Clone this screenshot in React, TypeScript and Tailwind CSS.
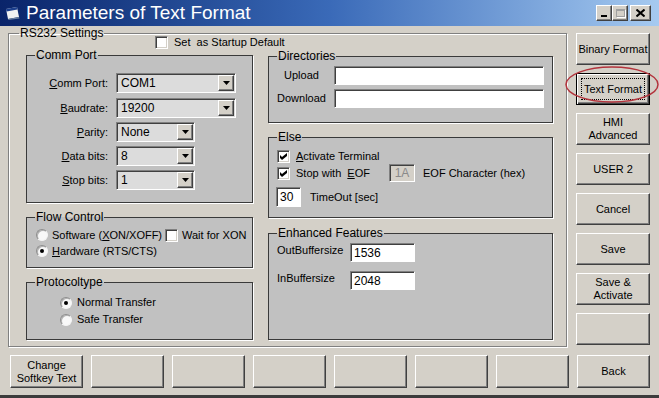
import React from "react";

type Kids = { children?: React.ReactNode };

function U({ children }: Kids) {
  return <span className="underline underline-offset-[1px] decoration-1">{children}</span>;
}

function Group({ title, className = "", children }: Kids & { title: string; className?: string }) {
  return (
    <fieldset
      className={`bg-[#c1c1c1] border border-[#3a3a3a] shadow-[1px_1px_0_#ffffff] ${className}`}
    >
      <legend className="ml-[8px] px-[1px] text-[12px] leading-[13px]">{title}</legend>
      {children}
    </fieldset>
  );
}

function Button({ lines, focused = false }: { lines: string[]; focused?: boolean }) {
  return (
    <button
      className={`relative w-[74px] h-[32px] shrink-0 bg-[#d4d0c8] text-[11px] leading-[13px] text-black flex flex-col items-center justify-center ${
        focused
          ? "border border-black shadow-[inset_1px_1px_0_#ffffff,inset_-1px_-1px_0_#404040,inset_-2px_-2px_0_#808080]"
          : "border border-t-white border-l-white border-r-[#404040] border-b-[#404040] shadow-[inset_-1px_-1px_0_#808080]"
      }`}
    >
      {lines.map((l) => (
        <span key={l}>{l}</span>
      ))}
      {focused && <span className="absolute inset-[4px] border border-dotted border-black" />}
    </button>
  );
}

function BottomButton({ lines }: { lines: string[] }) {
  return (
    <button className="w-[73px] h-[33px] shrink-0 bg-[#d4d0c8] text-[11px] leading-[13px] text-black flex flex-col items-center justify-center border border-t-white border-l-white border-r-[#404040] border-b-[#404040] shadow-[inset_-1px_-1px_0_#808080]">
      {lines.map((l) => (
        <span key={l}>{l}</span>
      ))}
    </button>
  );
}

function Combo({ value, width }: { value: string; width: string }) {
  return (
    <div
      className={`${width} h-[20px] flex items-center bg-[#dcdcdc] border border-t-[#808080] border-l-[#808080] border-r-white border-b-white shadow-[inset_1px_1px_0_#404040] pl-[4px] pr-[1px]`}
    >
      <span className="flex-1 text-[12px] leading-[14px]">{value}</span>
      <span className="w-[16px] h-[16px] flex items-center justify-center bg-[#d4d0c8] border border-t-white border-l-white border-r-[#404040] border-b-[#404040] shadow-[inset_-1px_-1px_0_#808080]">
        <svg width="7" height="4" viewBox="0 0 7 4">
          <path d="M0 0h7L3.5 4z" fill="#000" />
        </svg>
      </span>
    </div>
  );
}

function Field({ value = "", className = "", disabled = false }: { value?: string; className?: string; disabled?: boolean }) {
  return (
    <div
      className={`${className} flex items-center pl-[3px] border border-t-[#808080] border-l-[#808080] border-r-white border-b-white shadow-[inset_1px_1px_0_#404040] text-[12px] leading-[14px] ${
        disabled ? "bg-[#d4d0c8] text-[#8a8a8a]" : "bg-white text-black"
      }`}
    >
      {value}
    </div>
  );
}

function Check({ checked = false }: { checked?: boolean }) {
  return (
    <span className="w-[13px] h-[13px] shrink-0 bg-white flex items-center justify-center border border-t-[#808080] border-l-[#808080] border-r-white border-b-white shadow-[inset_1px_1px_0_#404040,inset_-1px_-1px_0_#d4d0c8]">
      {checked && (
        <svg width="7" height="7" viewBox="0 0 7 7">
          <path d="M0 2L2 4L7 0V3L2 7L0 5Z" fill="#000" />
        </svg>
      )}
    </span>
  );
}

function Radio({ checked = false }: { checked?: boolean }) {
  return (
    <span className="w-[12px] h-[12px] shrink-0 rounded-full bg-[#f8f8f8] flex items-center justify-center border border-t-[#8c8c8c] border-l-[#8c8c8c] border-r-[#f4f4f4] border-b-[#f4f4f4] shadow-[inset_1px_1px_0_#b0b0b0]">
      {checked && <span className="w-[4px] h-[4px] rounded-full bg-black" />}
    </span>
  );
}

export default function App() {
  const combos: [React.ReactNode, string, string][] = [
    [<><U>C</U>omm Port:</>, "COM1", "w-[120px]"],
    [<><U>B</U>audrate:</>, "19200", "w-[120px]"],
    [<><U>P</U>arity:</>, "None", "w-[79px]"],
    [<><U>D</U>ata bits:</>, "8", "w-[79px]"],
    [<><U>S</U>top bits:</>, "1", "w-[79px]"],
  ];

  return (
    <div className="relative w-[659px] h-[398px] bg-[#d4d0c8] overflow-hidden border-b-[3px] border-[#3c3c3c] font-['Liberation_Sans',Arial,sans-serif] text-[11px] text-black">
      {/* Title bar */}
      <div className="h-[26px] flex items-center bg-linear-to-r from-[#0a246a] via-[#3a6ab8] to-[#a6caf0]">
        <svg className="ml-[5px]" width="16" height="14" viewBox="0 0 16 14">
          <path d="M1 3L12 1L14 11L3 13Z" fill="#f2f2f2" />
          <path d="M1 3L12 1L12.5 3.5L1.5 5.5Z" fill="#1c3f8c" />
          <path d="M3 13L14 11L14.5 12.5L3.5 14Z" fill="#6a7f9e" />
        </svg>
        <span className="ml-[5px] text-[19px] leading-[22px] text-white">Parameters of Text Format</span>
        <div className="ml-auto mr-[8px] flex items-center">
          <span className="w-[16px] h-[16px] bg-[#d4d0c8] flex items-end justify-center pb-[3px] border border-t-white border-l-white border-r-[#404040] border-b-[#404040] shadow-[inset_-1px_-1px_0_#808080]">
            <span className="w-[6px] h-[2px] bg-black" />
          </span>
          <span className="w-[16px] h-[16px] bg-[#d4d0c8] flex items-center justify-center border border-t-white border-l-white border-r-[#404040] border-b-[#404040] shadow-[inset_-1px_-1px_0_#808080]">
            <span className="w-[9px] h-[8px] border border-[#a0a0a0] border-t-2 shadow-[1px_1px_0_#ffffff]" />
          </span>
          <span className="ml-[2px] w-[21px] h-[16px] bg-[#d4d0c8] flex items-center justify-center border border-t-white border-l-white border-r-[#404040] border-b-[#404040] shadow-[inset_-1px_-1px_0_#808080]">
            <svg width="9" height="8" viewBox="0 0 9 8">
              <path d="M0.5 0.5L8.5 7.5M8.5 0.5L0.5 7.5" stroke="#000" strokeWidth="2" />
            </svg>
          </span>
        </div>
      </div>

      {/* Main area */}
      <div className="flex">
        <fieldset className="ml-[8px] mt-[1px] w-[559px] h-[320px] border border-[#808080] shadow-[1px_1px_0_#ffffff,inset_1px_1px_0_#ffffff]">
          <legend className="ml-[10px] px-[1px] text-[12px] leading-[13px]">RS232 Settings</legend>

          <div className="-mt-[4px] h-[13px] ml-[146px] flex items-center">
            <Check />
            <span className="ml-[6px] leading-[13px]">Set&nbsp;&nbsp;as Startup Default</span>
          </div>

          <div className="flex pl-[17px] gap-[15px]">
            {/* left column */}
            <div className="w-[227px] flex flex-col">
              <Group title="Comm Port" className="h-[154px]">
                <div className="pt-[11px] flex flex-col gap-[4px]">
                  {combos.map(([label, value, w], i) => (
                    <div key={value} className={`flex items-center h-[20px] ${i === 0 ? "mb-[1px]" : ""}`}>
                      <span className="w-[81px] text-right text-[11px]">{label}</span>
                      <div className="ml-[8px]">
                        <Combo value={value} width={w} />
                      </div>
                    </div>
                  ))}
                </div>
              </Group>

              <Group title="Flow Control" className="mt-[8px] h-[57px]">
                <div className="pt-[3px] text-[11px]">
                  <div className="h-[16px] flex items-center pl-[9px]">
                    <Radio />
                    <span className="ml-[4px] w-[113px] whitespace-nowrap">
                      Software (<U>X</U>ON/XOFF)
                    </span>
                    <Check />
                    <span className="ml-[4px] whitespace-nowrap">Wait for XON</span>
                  </div>
                  <div className="h-[16px] flex items-center pl-[9px]">
                    <Radio checked />
                    <span className="ml-[4px]">
                      <U>H</U>ardware (RTS/CTS)
                    </span>
                  </div>
                </div>
              </Group>

              <Group title="Protocoltype" className="mt-[8px] h-[64px]">
                <div className="pt-[5px] text-[11px]">
                  <div className="h-[17px] flex items-center pl-[33px]">
                    <Radio checked />
                    <span className="ml-[5px]">Normal Transfer</span>
                  </div>
                  <div className="h-[17px] flex items-center pl-[33px]">
                    <Radio />
                    <span className="ml-[5px]">Safe Transfer</span>
                  </div>
                </div>
              </Group>
            </div>

            {/* right column */}
            <div className="w-[285px] flex flex-col">
              <Group title="Directories" className="mt-[1px] h-[73px]">
                <div className="pt-[3px] flex flex-col gap-[4px] text-[11px]">
                  <div className="h-[19px] flex items-center">
                    <span className="w-[65px] text-center">Upload</span>
                    <Field className="w-[210px] h-[19px]" />
                  </div>
                  <div className="h-[19px] flex items-center">
                    <span className="w-[65px] text-center">Download</span>
                    <Field className="w-[210px] h-[19px]" />
                  </div>
                </div>
              </Group>

              <Group title="Else" className="mt-[8px] h-[87px]">
                <div className="pt-[5px] text-[11px]">
                  <div className="h-[15px] flex items-center pl-[8px]">
                    <Check checked />
                    <span className="ml-[6px]">
                      <U>A</U>ctivate Terminal
                    </span>
                  </div>
                  <div className="h-[18px] flex items-center pl-[8px]">
                    <Check checked />
                    <span className="ml-[6px] w-[93px] whitespace-nowrap">
                      Stop with&nbsp;&nbsp;<U>E</U>OF
                    </span>
                    <Field value="1A" disabled className="w-[26px] h-[18px] justify-center !pl-0" />
                    <span className="ml-[8px]">EOF Character (hex)</span>
                  </div>
                  <div className="mt-[5px] h-[20px] flex items-center pl-[7px]">
                    <Field value="30" className="w-[25px] h-[20px]" />
                    <span className="ml-[9px]">TimeOut [sec]</span>
                  </div>
                </div>
              </Group>

              <Group title="Enhanced Features" className="mt-[9px] h-[113px]">
                <div className="pt-[3px] text-[11px]">
                  <div className="flex items-start pl-[8px]">
                    <span className="w-[73px] mt-[1px] leading-[13px]">OutBuffersize</span>
                    <Field value="1536" className="w-[65px] h-[19px]" />
                  </div>
                  <div className="mt-[9px] flex items-start pl-[8px]">
                    <span className="w-[73px] mt-[1px] leading-[13px]">InBuffersize</span>
                    <Field value="2048" className="w-[65px] h-[19px]" />
                  </div>
                </div>
              </Group>
            </div>
          </div>
        </fieldset>

        {/* right buttons */}
        <div className="ml-[9px] mt-[7px] flex flex-col gap-[8px]">
          <Button lines={["Binary Format"]} />
          <Button lines={["Text Format"]} focused />
          <Button lines={["HMI", "Advanced"]} />
          <Button lines={["USER 2"]} />
          <Button lines={["Cancel"]} />
          <Button lines={["Save"]} />
          <Button lines={["Save &", "Activate"]} />
          <Button lines={[""]} />
        </div>
      </div>

      {/* bottom softkeys */}
      <div className="mt-[8px] ml-[10px] flex gap-[8px]">
        <BottomButton lines={["Change", "Softkey Text"]} />
        <BottomButton lines={[""]} />
        <BottomButton lines={[""]} />
        <BottomButton lines={[""]} />
        <BottomButton lines={[""]} />
        <BottomButton lines={[""]} />
        <BottomButton lines={[""]} />
        <BottomButton lines={["Back"]} />
      </div>

      {/* annotation ellipse */}
      <svg className="absolute left-[564px] top-[65px]" width="95" height="40" viewBox="0 0 95 40">
        <ellipse cx="48" cy="19.5" rx="46" ry="17.5" fill="none" stroke="#b3333c" strokeWidth="1.5" />
      </svg>
    </div>
  );
}
